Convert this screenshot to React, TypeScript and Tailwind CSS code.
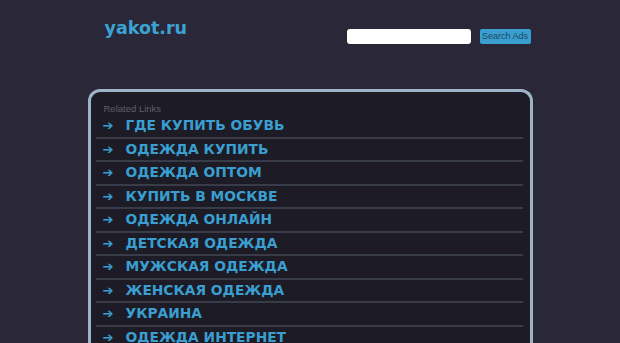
import React from "react";

const links = [
  "ГДЕ КУПИТЬ ОБУВЬ",
  "ОДЕЖДА КУПИТЬ",
  "ОДЕЖДА ОПТОМ",
  "КУПИТЬ В МОСКВЕ",
  "ОДЕЖДА ОНЛАЙН",
  "ДЕТСКАЯ ОДЕЖДА",
  "МУЖСКАЯ ОДЕЖДА",
  "ЖЕНСКАЯ ОДЕЖДА",
  "УКРАИНА",
  "ОДЕЖДА ИНТЕРНЕТ",
];

export default function App() {
  return (
    <div className="h-[343px] w-full overflow-hidden bg-[#2a2838] font-['DejaVu_Sans',sans-serif]">
      <div className="mx-auto w-[445px]">
        {/* header */}
        <div className="flex items-start justify-between pt-[15px]">
          <div className="pl-[17px] text-[17.5px] font-bold leading-[26px] text-[#3ba3d3]">
            yakot.ru
          </div>
          <div className="mt-[14px] flex items-center gap-[9px] pr-[2px]">
            <input
              type="text"
              className="h-[15px] w-[124px] rounded-[3px] border-0 bg-white outline-none"
            />
            <button className="h-[15px] w-[51px] rounded-[2px] bg-[#3a9fd0] p-0 font-['Liberation_Sans',sans-serif] text-[9px] leading-[15px] text-[#1d4862]">
              Search Ads
            </button>
          </div>
        </div>

        {/* links panel */}
        <div className="mt-[45px] h-[300px] rounded-tl-[12px] rounded-tr-[12px] border-[3px] border-b-0 border-[#9db3c7] bg-[#1c1b26] pt-[11px]">
          <div className="pl-[13px] font-['Liberation_Sans',sans-serif] text-[9.5px] leading-[12px] text-[#5f5f68]">
            Related Links
          </div>
          <ul className="ml-[5px] mr-[7px]">
            {links.map((l) => (
              <li
                key={l}
                className="flex h-[23.5px] items-center border-b-2 border-[#383b48] pl-[7px] text-[13.8px] font-bold text-[#3a9fd0]"
              >
                <span className="w-[23px] text-[13px]">➔</span>
                <span>{l}</span>
              </li>
            ))}
          </ul>
        </div>
      </div>
    </div>
  );
}
